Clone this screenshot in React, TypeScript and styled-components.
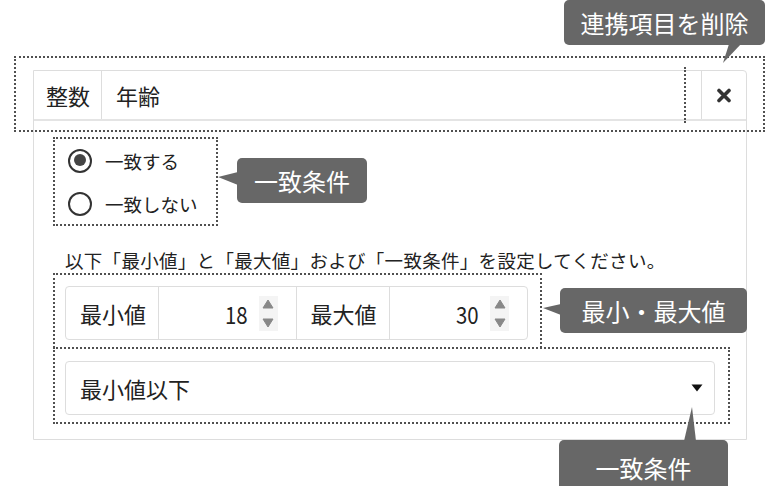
import React from "react"
import styled, { createGlobalStyle } from "styled-components"

const GlobalStyle = createGlobalStyle`
  body {
    margin: 0;
    background: #ffffff;
    font-family: "Noto Sans CJK JP", "Noto Sans", sans-serif;
    color: #222222;
  }
`

const Stage = styled.div`
  position: relative;
  width: 780px;
  height: 486px;
  overflow: hidden;
`

const Card = styled.div`
  box-sizing: border-box;
  width: 714px;
  margin: 70px 0 0 33px;
  border: 1px solid #dddddd;
  border-radius: 0 4px 0 0;
`

const Header = styled.div`
  display: flex;
  height: 48px;
  border-bottom: 2px solid #e4e4e4;
  font-size: 22px;
`

const HeaderLabel = styled.div`
  display: flex;
  align-items: center;
  width: 68px;
  padding-left: 12px;
  box-sizing: border-box;
  border-right: 1px solid #dddddd;
`

const HeaderValue = styled.div`
  flex: 1;
  display: flex;
  align-items: center;
  padding-left: 14px;
`

const RemoveButton = styled.div`
  display: flex;
  align-items: center;
  justify-content: center;
  width: 44px;
  border-left: 1px solid #dddddd;
`

const Body = styled.div`
  padding: 18px 31px 24px 31px;
`

const RadioList = styled.div`
  display: flex;
  flex-direction: column;
`

const RadioRow = styled.label`
  display: flex;
  align-items: center;
  height: 43px;
  padding-left: 3px;
  gap: 13px;
  font-size: 18.5px;
`

const RadioCircle = styled.span<{ $checked?: boolean }>`
  position: relative;
  width: 24px;
  height: 24px;
  box-sizing: border-box;
  border: 2.5px solid #333333;
  border-radius: 50%;
  &:after {
    content: "";
    display: ${p => (p.$checked ? "block" : "none")};
    position: absolute;
    left: 3.5px;
    top: 3.5px;
    width: 12px;
    height: 12px;
    border-radius: 50%;
    background: #444444;
  }
`

const Hint = styled.p`
  margin: 22px 0 0 0;
  font-size: 18.5px;
  line-height: 26px;
  letter-spacing: 0.3px;
  white-space: nowrap;
`

const RangeGroup = styled.div`
  display: flex;
  width: 463px;
  height: 54px;
  margin-top: 13px;
  box-sizing: border-box;
  border: 1px solid #dddddd;
  border-radius: 4px;
  font-size: 22px;
`

const RangeLabel = styled.div`
  display: flex;
  align-items: center;
  width: 94px;
  padding-left: 14px;
  box-sizing: border-box;
  border-right: 1px solid #dddddd;
`

const NumberCell = styled.div<{ $last?: boolean }>`
  display: flex;
  align-items: center;
  justify-content: flex-end;
  width: 138px;
  padding-right: 18px;
  box-sizing: border-box;
  border-right: ${p => (p.$last ? "none" : "1px solid #dddddd")};
`

const NumberText = styled.span`
  display: inline-block;
  font-size: 24px;
  transform: scaleX(0.85);
  transform-origin: right center;
`

const Spinner = styled.div`
  display: flex;
  flex-direction: column;
  align-items: center;
  justify-content: space-between;
  width: 19px;
  height: 35px;
  margin-left: 11px;
  padding: 3px 0;
  box-sizing: border-box;
  background: #f4f4f4;
`

const SelectBox = styled.div`
  display: flex;
  align-items: center;
  justify-content: space-between;
  width: 650px;
  height: 54px;
  margin-top: 21px;
  padding: 0 11px 0 14px;
  box-sizing: border-box;
  border: 1px solid #dddddd;
  border-radius: 4px;
  font-size: 22px;
`

const DottedFrame = styled.div<{ $x: number; $y: number; $w: number; $h: number; $noBottom?: boolean }>`
  position: absolute;
  left: ${p => p.$x}px;
  top: ${p => p.$y}px;
  width: ${p => p.$w}px;
  height: ${p => p.$h}px;
  box-sizing: border-box;
  border: 2px dotted #505050;
  border-bottom-style: ${p => (p.$noBottom ? "none" : "dotted")};
  pointer-events: none;
`

const DottedLine = styled.div<{ $x: number; $y: number; $h: number }>`
  position: absolute;
  left: ${p => p.$x}px;
  top: ${p => p.$y}px;
  height: ${p => p.$h}px;
  border-left: 2px dotted #505050;
`

const Bubble = styled.div<{ $x: number; $y: number; $w: number; $h: number }>`
  position: absolute;
  left: ${p => p.$x}px;
  top: ${p => p.$y}px;
  width: ${p => p.$w}px;
  height: ${p => p.$h}px;
  display: flex;
  align-items: center;
  justify-content: center;
  background: #676767;
  border-radius: 5px;
  color: #ffffff;
  font-size: 24px;
  white-space: nowrap;
`

const Pointer = styled.svg`
  position: absolute;
  left: 0;
  top: 0;
  overflow: visible;
`

const callout = (points: string) => (
  <Pointer width="1" height="1">
    <polygon points={points} fill="#676767" />
  </Pointer>
)

const Arrows: React.FC = () => (
  <Spinner>
    <svg width="12" height="10" viewBox="0 0 12 10"><path d="M6 1 L11 9 H1 Z" fill="#888" stroke="#888" strokeLinejoin="round" /></svg>
    <svg width="12" height="10" viewBox="0 0 12 10"><path d="M1 1 H11 L6 9 Z" fill="#888" stroke="#888" strokeLinejoin="round" /></svg>
  </Spinner>
)

const App: React.FC = () => {
  return (
    <Stage>
      <GlobalStyle />
      <Card>
        <Header>
          <HeaderLabel>整数</HeaderLabel>
          <HeaderValue>年齢</HeaderValue>
          <RemoveButton>
            <svg width="16" height="15" viewBox="0 0 16 15">
              <path d="M3 2.5 L13 12.5 M13 2.5 L3 12.5" stroke="#333" strokeWidth="3.6" strokeLinecap="round" />
            </svg>
          </RemoveButton>
        </Header>
        <Body>
          <RadioList>
            <RadioRow>
              <RadioCircle $checked />
              一致する
            </RadioRow>
            <RadioRow>
              <RadioCircle />
              一致しない
            </RadioRow>
          </RadioList>
          <Hint>以下「最小値」と「最大値」および「一致条件」を設定してください。</Hint>
          <RangeGroup>
            <RangeLabel>最小値</RangeLabel>
            <NumberCell>
              <NumberText>18</NumberText>
              <Arrows />
            </NumberCell>
            <RangeLabel>最大値</RangeLabel>
            <NumberCell $last>
              <NumberText>30</NumberText>
              <Arrows />
            </NumberCell>
          </RangeGroup>
          <SelectBox>
            最小値以下
            <svg width="12" height="8" viewBox="0 0 12 8"><path d="M0.5 0.5 H11.5 L6 7.5 Z" fill="#111" /></svg>
          </SelectBox>
        </Body>
      </Card>

      <DottedFrame $x={14} $y={56} $w={751} $h={76} />
      <DottedLine $x={684} $y={67} $h={56} />
      <DottedFrame $x={53} $y={137} $w={165} $h={89} />
      <DottedFrame $x={53} $y={273} $w={489} $h={75} $noBottom />
      <DottedFrame $x={53} $y={347} $w={677} $h={77} />

      <Bubble $x={564} $y={0} $w={201} $h={45}>
        {callout("165,44 177,44 159,63")}
        連携項目を削除
      </Bubble>
      <Bubble $x={237} $y={158} $w={130} $h={45}>
        {callout("1,14 1,27 -19,19")}
        一致条件
      </Bubble>
      <Bubble $x={560} $y={288} $w={187} $h={45}>
        {callout("1,16 1,27 -17,20")}
        最小・最大値
      </Bubble>
      <Bubble $x={559} $y={440} $w={169} $h={54}>
        {callout("125,1 137,1 133,-33")}
        一致条件
      </Bubble>
    </Stage>
  )
}

export default App
